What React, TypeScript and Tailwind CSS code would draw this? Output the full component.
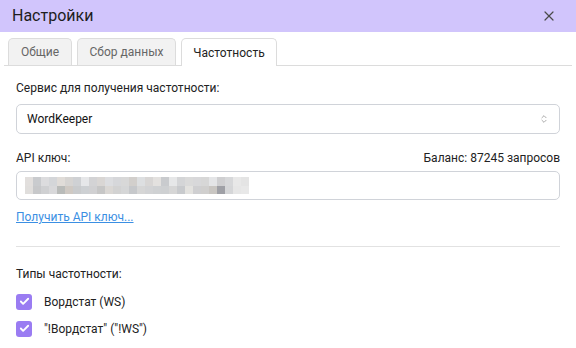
import { X, ChevronsUpDown, Check } from "lucide-react";

const keyShades = [
  "#e2dfdd", "#c9cbce", "#dcdcde", "#d4d6d9", "#e0dcd8", "#d6d4d2", "#cfd1d4", "#e6e7e9",
  "#d3d3d5", "#d9d6d4", "#dcdde0", "#d6d7da", "#d8d8d8", "#d2cfcc", "#dddfe1", "#d8d6d5",
  "#e3e1df", "#c9cbce", "#e6e7e8", "#d4d5d7", "#dadada", "#d8d8da", "#d7d7d7", "#e4e5e7",
  "#cfcfd1", "#d7d8da", "#e8e8e8", "#e4e4e4",
  "#e0dedc", "#c7c8ca", "#cfd0d2", "#d8d8da", "#b9bbb9", "#cfc9c3", "#c9cbcd", "#cdd0d3",
  "#d0d0d2", "#c6c6c6", "#dad7d4", "#d2d2d2", "#d5d6d7", "#c6c8cb", "#d6d6d6", "#d2d3d5",
  "#cfd1d3", "#ced0d2", "#d6d6d6", "#c8cacd", "#e3e2df", "#cfcfd1", "#d0cfce", "#c9c6c2",
  "#9fa0a6", "#d5d6d8", "#e6e6e6", "#e8e8e8",
];

function Tab({ label, active, width }: { label: string; active?: boolean; width: string }) {
  return (
    <div
      className={
        (active
          ? "h-[28px] -mb-px bg-white text-[#222] "
          : "h-[27px] bg-[#f2f2f2] text-[#666] ") +
        "flex items-center justify-center rounded-t-[5px] border border-b-0 border-[#dcdcdc] text-[12px] " +
        width
      }
    >
      {label}
    </div>
  );
}

function CheckRow({ label }: { label: string }) {
  return (
    <div className="flex items-center gap-3 h-[17px]">
      <div className="w-4 h-4 rounded-[3px] bg-[#9a7cf2] flex items-center justify-center">
        <Check className="w-[11px] h-[11px] text-white" strokeWidth={4} />
      </div>
      <span className="text-[12px] text-[#222]">{label}</span>
    </div>
  );
}

export default function App() {
  return (
    <div className="w-[576px] h-[348px] bg-white overflow-hidden font-['Roboto',sans-serif]">
      {/* Header */}
      <div className="h-8 bg-[#d1c5fc] flex items-center justify-between pl-3 pr-[19px]">
        <span className="text-[16px] text-[#1d1d1d]">Настройки</span>
        <X className="w-[16px] h-[16px] text-[#4a4a4a]" strokeWidth={1.8} />
      </div>

      {/* Tabs */}
      <div className="mx-1 mt-[6px] pl-1 flex items-end gap-[5px] border-b border-[#dcdcdc]">
        <Tab label="Общие" width="w-[64px]" />
        <Tab label="Сбор данных" width="w-[99px]" />
        <Tab label="Частотность" width="w-[96px]" active />
      </div>

      {/* Content */}
      <div className="px-4 pt-[14px]">
        <div className="text-[12px] text-[#222] leading-[16px]">Сервис для получения частотности:</div>
        <div className="mt-[8px] h-[30px] rounded-[5px] border border-[#d0d3d9] flex items-center justify-between pl-[10px] pr-[10px]">
          <span className="text-[12px] text-[#111]">WordKeeper</span>
          <ChevronsUpDown className="w-[10px] h-[10px] text-[#9a9a9a]" strokeWidth={2} />
        </div>

        <div className="mt-[16px] flex items-end justify-between text-[12px] text-[#222] leading-[16px]">
          <span>API ключ:</span>
          <span>Баланс: 87245 запросов</span>
        </div>
        <div className="mt-[5px] h-[29px] rounded-[5px] border border-[#d0d3d9] flex items-center pl-2">
          <div className="grid grid-cols-[repeat(28,8px)]">
            {keyShades.map((c, i) => (
              <div key={i} className="w-2 h-[8.5px]" style={{ backgroundColor: c }} />
            ))}
          </div>
        </div>

        <div className="mt-[9px] text-[12px] leading-[16px]">
          <span className="text-[#3b8fe3] underline">Получить API ключ...</span>
        </div>

        <div className="mt-[21px] border-t border-[#e2e2e2]" />

        <div className="mt-[19px] text-[12px] text-[#222] leading-[16px]">Типы частотности:</div>
        <div className="mt-[11px] flex flex-col gap-[10px]">
          <CheckRow label="Вордстат (WS)" />
          <CheckRow label={'"!Вордстат" ("!WS")'} />
        </div>
      </div>
    </div>
  );
}
